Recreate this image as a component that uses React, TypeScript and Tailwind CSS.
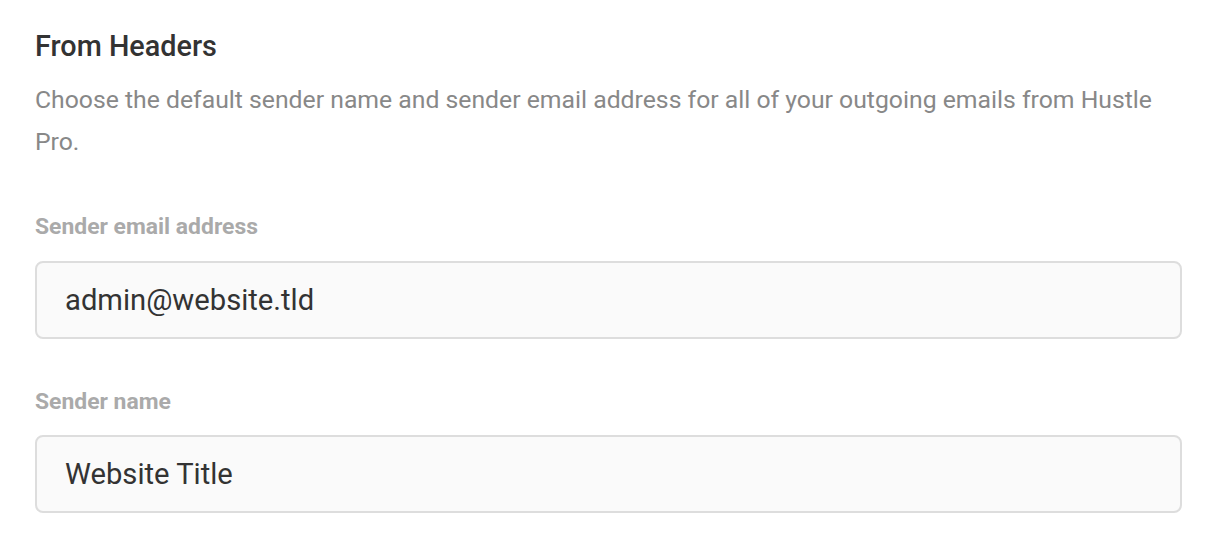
import React from 'react';

const fieldClass =
  'block w-full h-[78px] rounded-[8px] border-2 border-[#dddddd] bg-[#fafafa] px-[28px] text-[29.2px] leading-[36px] text-[#333333] outline-none';

export default function App() {
  return (
    <div className="min-h-screen bg-white font-['Roboto',sans-serif]">
      <div className="w-[1147px] ml-[35px] pt-[26px]">
        <h2 className="text-[28.8px] leading-[40px] font-medium text-[#333333]">From Headers</h2>
        <p className="mt-[13px] text-[24.75px] leading-[42px] text-[#888888]">
          Choose the default sender name and sender email address for all of your outgoing emails from Hustle Pro.
        </p>

        <div className="mt-[49px]">
          <label className="block text-[22.9px] leading-[30px] font-bold text-[#aaaaaa]">Sender email address</label>
          <input className={`${fieldClass} mt-[19px]`} defaultValue="admin@website.tld" readOnly />
        </div>

        <div className="mt-[48px]">
          <label className="block text-[22.9px] leading-[30px] font-bold text-[#aaaaaa]">Sender name</label>
          <input className={`${fieldClass} mt-[18px]`} defaultValue="Website Title" readOnly />
        </div>
      </div>
    </div>
  );
}
